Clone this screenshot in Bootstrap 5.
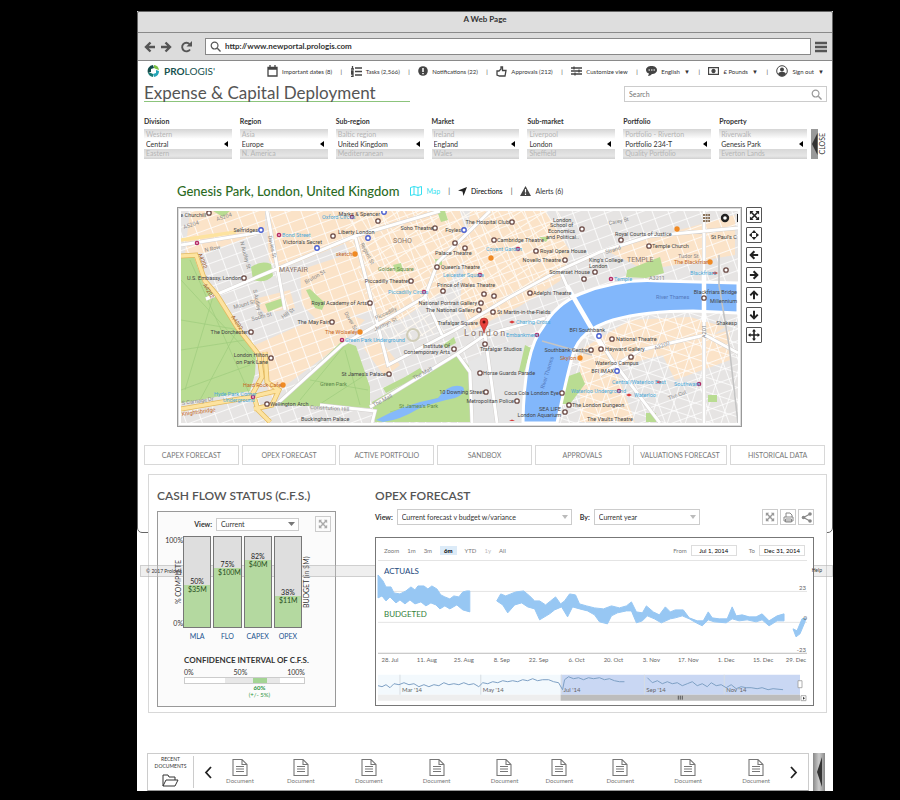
<!DOCTYPE html>
<html lang="en">
<head>
<meta charset="utf-8">
<meta name="viewport" content="width=device-width, initial-scale=1">
<title>A Web Page</title>
<link href="https://cdn.jsdelivr.net/npm/bootstrap@5.3.0/dist/css/bootstrap.min.css" rel="stylesheet">
<style>
body{background:#000;font-family:Lato,"Open Sans",sans-serif;font-size:7px;line-height:9px;color:#333;padding:11px 67px 9px 137px}
button,select,input{font-family:inherit;font-size:inherit;line-height:inherit;color:inherit;padding:0;border:0;background:none}
svg{display:block;flex:none}
a{color:inherit;text-decoration:none}
.ic{fill:none;stroke:#444;stroke-width:1.3}
.window{background:#fff}
.frame{inset:0 0 auto 0;height:522px;border:1px solid #666;border-radius:2px 2px 5px 5px;pointer-events:none}
.titlebar{background:#dedede;height:22px;border-bottom:1px solid #8a8a8a;font-size:8px;font-weight:700;padding-top:4px}
.toolbar{background:#dcdcdc;height:28px;border-bottom:1px solid #8a8a8a;padding:0 6px 0 7px}
.address{border:1px solid #888;background:#fff;height:17px}
.address input{font-size:8px;font-weight:700;color:#333;outline:0}
.topnav{height:20px;padding:0 9px 0 10px}
.brandname{font-size:10px;line-height:12px;color:#17524f}
.links{margin-left:52px;font-size:6px}
.heading{padding:4px 6px 0 7px}
.heading h1{font-size:17px;line-height:16px;color:#555;width:266px;border-bottom:1px solid #8cc47c;margin:0}
.searchbox{width:203px;height:16px;border:1px solid #ccc;color:#888}
.filters{padding:15px 6px 0 7px}
.filters label{font-weight:700;font-size:7px;line-height:9px;margin-bottom:3px;display:block}
.wheel{height:30px;background:linear-gradient(#d5d5d5,#f8f8f8 28%,#fff 33%,#fff 66%,#d8d8d8 67%,#e6e6e6 90%,#d0d0d0);padding:1px 0 0 2px;color:#b5b5b5;overflow:hidden}
.wheel select{appearance:none;display:block;width:100%;height:10px;color:#333;line-height:10px;outline:0}
.wheel .tri{right:4px;top:12px;border:3px solid transparent;border-right:4px solid #000;border-left:0}
.vert{writing-mode:vertical-rl;transform:rotate(180deg);white-space:nowrap}
.mapsec{padding:24px 71px 0 40px}
.mapsec h2{font-size:13px;line-height:16px;color:#2c6b1f;margin:0 11px 0 0;font-weight:500}
.mapbox{border:1px solid #999;outline:1px solid #ddd;outline-offset:-2px;padding:3px}
.mapbtn{width:16px;height:16px;border:1px solid #555;border-radius:1px;display:grid;place-items:center}
.tabs7{padding:18px 8px 0 7px;gap:3px}
.tabs7 button{flex:1 1 0;height:20px;border:1px solid #d8d8d8;font-size:7px;color:#777;white-space:nowrap}
.panel{margin:9px 6px 0 11px;border:1px solid #d8d8d8;background:#fff;height:239px;padding:12px 12px 4px 8px;gap:39px}
.panel h2{font-size:12px;line-height:17px;font-weight:600;color:#555;margin:0}
.cfs{width:179px}
.cfsbox{border:1px solid #999;background:#fbfbfb;margin-top:7px;height:196px}
.cfstitle{font-size:8px;margin-top:15px}
.sel{border:1px solid #ccc;appearance:none;background:#fff;outline:0}
.plot{height:92px;gap:2px}
.bar{flex:1 1 0;border:1px solid #777;background:#dedede;color:#222;font-size:7px;line-height:8px;text-align:center}
.fill{background:#b4d9a0;color:#274e1c;text-align:left;padding-left:4px}
.names{font-size:7px;color:#1b5490;gap:2px}
.names span{flex:1 1 0;text-align:center}
.ci{height:7px;border:1px solid #ccc;background:linear-gradient(90deg,#fff 34%,#e8e8e8 34% 57%,#a4d494 57% 69%,#e8e8e8 69% 80%,#fff 80%)}
.opexrow{margin-top:5px}
.opexbox{border:1px solid #777;background:#fff;height:169px;margin-top:12px;padding:0 1px;z-index:3}
.tool{width:16px;height:16px;border:1px solid #ccc;display:grid;place-items:center}
.strip{left:3px;right:0;top:554px;height:12px;background:rgba(210,210,210,.35);border:1px solid rgba(160,160,160,.4);font-size:5px;line-height:10px;padding:0 11px 0 5px;z-index:2}
.dates input{width:46px;height:11px;border:1px solid #ddd;text-align:center}
.zoomrow{font-size:6px;color:#777;padding:3px 3px 0 7px;height:22px}
.docs{margin:40px 8px 0 10px;height:38px}
.docbar{border:1px solid #ccc;border-bottom-color:#999}
.recent{width:46px;border-right:1px solid #ccc;font-size:5px;line-height:7px;text-align:center;margin:2px 0}
.prev{padding:0 7px 0 10px}
.next{padding-right:10px}
.doclist{display:grid;flex:1 1 0;grid-template-columns:40fr 82fr 54fr 82fr 54fr 56fr 66fr 70fr 66fr;font-size:6px;line-height:7px;color:#777}
.doclist a{display:flex;flex-direction:column;align-items:center;min-width:0}
.handle{width:12px;background:linear-gradient(90deg,#888,#ccc 50%,#888)}
</style>
</head>
<body>
<svg width="0" height="0" class="position-absolute" aria-hidden="true">
<defs>
<symbol id="expand" viewBox="0 0 12 12"><path d="M2.5 2.5l7 7M9.500 2.500l-7 7" stroke="currentColor" stroke-width="1.700" fill="none"/><path d="M1 1h4L1 5zM11 1v4L7 1zM1 11V7l4 4zM11 11H7l4-4z" fill="currentColor"/></symbol>
<symbol id="arrow" viewBox="0 0 12 12"><path d="M11 6H2M6.500 1.500L2 6l4.500 4.500" fill="none" stroke="currentColor" stroke-width="2.400"/></symbol>
<symbol id="doc" viewBox="0 0 16 18"><path d="M1 1h9l5 5v11H1zM10 1v5h5M4 8h8M4 10.500h8M4 13h8" fill="none" stroke="#777" stroke-width="1.100"/></symbol>
<symbol id="mag" viewBox="0 0 12 12"><circle cx="5" cy="5" r="3.700" fill="none" stroke="currentColor" stroke-width="1.300"/><path d="M8 8l3.500 3.500" stroke="currentColor" stroke-width="1.500"/></symbol>
</defs>
</svg>
<div class="window position-relative">
<div class="frame position-absolute"></div>
<div class="titlebar text-center">A Web Page</div>
<div class="toolbar d-flex align-items-center">
  <button aria-label="Back"><svg width="12" height="12" color="#555"><use href="#arrow"/></svg></button>
  <button aria-label="Forward" class="ms-1 me-2"><svg width="12" height="12" viewBox="0 0 12 12"><path d="M1 6h9M5.500 1.500L10 6l-4.500 4.500" fill="none" stroke="#555" stroke-width="2.400"/></svg></button>
  <button aria-label="Reload" class="me-2"><svg width="13" height="12" viewBox="0 0 13 12"><path d="M10 8.500A4.300 4.300 0 1 1 9.500 3" fill="none" stroke="#555" stroke-width="1.900"/><path d="M12 0v5.500H6.500z" fill="#555"/></svg></button>
  <div class="address d-flex align-items-center flex-grow-1 px-1 ms-1 me-1"><svg width="11" height="11" color="#555"><use href="#mag"/></svg><input class="flex-grow-1 ms-1" aria-label="Address" value="http://www.newportal.prologis.com"></div>
  <button aria-label="Menu"><svg width="12" height="12" viewBox="0 0 12 12"><path d="M0 2h12M0 6h12M0 10h12" stroke="#555" stroke-width="2.400"/></svg></button>
</div>
<nav class="topnav d-flex align-items-center">
  <svg width="13" height="12" viewBox="0 0 13 12"><path d="M6 0A6 6 0 0 0 1 8l3-1V4l3-1z" fill="#124d4b"/><path d="M7 0a6 6 0 0 1 5 5L9 4 7 3z" fill="#7cc142"/><path d="M12 6a6 6 0 0 1-5 6l-1-3 3-1V5z" fill="#23a5b8"/><path d="M1 8a6 6 0 0 0 5 4V9L4 8z" fill="#1b7d77"/></svg>
  <span class="brandname ms-1"><b>PRO</b>LOGIS'</span>
  <div class="links d-flex align-items-center justify-content-between flex-grow-1 text-nowrap">
    <a href="#" class="d-flex align-items-center gap-1"><svg width="11" height="12" viewBox="0 0 11 12" class="ic"><path d="M1 2.500h9v8.500H1zM1 4h9M3 0v3M8 0v3"/></svg>Important dates (8)</a><span>|</span>
    <a href="#" class="d-flex align-items-center gap-1"><svg width="11" height="11" viewBox="0 0 11 11" class="ic"><path d="M4 2h7M4 5.500h7M4 9h7M1.500 0v3M0 3h3M0 5h2v1.500H0M0 8h2v2.500H0"/></svg>Tasks (2,566)</a><span>|</span>
    <a href="#" class="d-flex align-items-center gap-1"><svg width="10" height="10" viewBox="0 0 10 10"><circle cx="5" cy="5" r="4.800" fill="#444"/><path d="M5 2v4M5 7v1.300" stroke="#fff" stroke-width="1.500"/></svg>Notifications (22)</a><span>|</span>
    <a href="#" class="d-flex align-items-center gap-1"><svg width="11" height="11" viewBox="0 0 11 11" class="ic"><path d="M1 5h2l2-2V1h1.500v3.500H10L9 10H3.500L1 9z"/></svg>Approvals (212)</a><span>|</span>
    <a href="#" class="d-flex align-items-center gap-1"><svg width="11" height="10" viewBox="0 0 11 10" class="ic"><path d="M0 2h11M0 5h11M0 8h11M3 .5v3M8 3.500v3M4 6.500v3"/></svg>Customize view</a><span>|</span>
    <a href="#" class="d-flex align-items-center gap-1"><svg width="11" height="10" viewBox="0 0 11 10"><path d="M5.500 0c3 0 5.500 1.500 5.500 4S8.500 8 6 8c-1 1-2.500 2-4 2l1-2.500C1 7 0 5.500 0 4 0 1.500 2.500 0 5.500 0z" fill="#444"/><path d="M2.500 4h1.500M5 4h1.500M7.500 4H9" stroke="#fff"/></svg>English <span>▼</span></a><span>|</span>
    <a href="#" class="d-flex align-items-center gap-1"><svg width="11" height="8" viewBox="0 0 11 8" class="ic"><path d="M.5.5h10v7H.5z"/><circle cx="5.500" cy="4" r="1.500" fill="#444"/></svg>£ Pounds <span>▼</span></a><span>|</span>
    <a href="#" class="d-flex align-items-center gap-1"><svg width="12" height="12" viewBox="0 0 12 12"><circle cx="6" cy="6" r="5.300" fill="#fff" stroke="#444"/><circle cx="6" cy="4.500" r="2" fill="#444"/><path d="M2 9c1-3 7-3 8 0-2 3-6 3-8 0z" fill="#444"/></svg>Sign out <span>▼</span></a>
  </div>
</nav>
<div class="heading d-flex justify-content-between align-items-end">
  <h1 class="fw-normal text-nowrap">Expense &amp; Capital Deployment</h1>
  <div class="searchbox d-flex align-items-center px-1"><input class="flex-grow-1" placeholder="Search" aria-label="Search"><svg width="11" height="11" color="#999"><use href="#mag"/></svg></div>
</div>
<div class="filters d-flex align-items-end">
  <div class="d-flex flex-grow-1 gap-2">
    <div class="flex-fill w-100"><label for="f1">Division</label><div class="wheel position-relative">Western<select id="f1"><option>Central</option></select><i class="tri position-absolute"></i>Eastern</div></div>
    <div class="flex-fill w-100"><label for="f2">Region</label><div class="wheel position-relative">Asia<select id="f2"><option>Europe</option></select><i class="tri position-absolute"></i>N. America</div></div>
    <div class="flex-fill w-100"><label for="f3">Sub-region</label><div class="wheel position-relative">Baltic region<select id="f3"><option>United Kingdom</option></select><i class="tri position-absolute"></i>Mediterranean</div></div>
    <div class="flex-fill w-100"><label for="f4">Market</label><div class="wheel position-relative">Ireland<select id="f4"><option>England</option></select><i class="tri position-absolute"></i>Wales</div></div>
    <div class="flex-fill w-100"><label for="f5">Sub-market</label><div class="wheel position-relative">Liverpool<select id="f5"><option>London</option></select><i class="tri position-absolute"></i>Sheffield</div></div>
    <div class="flex-fill w-100"><label for="f6">Portfolio</label><div class="wheel position-relative">Portfolio - Riverton<select id="f6"><option>Portfolio 234-T</option></select><i class="tri position-absolute"></i>Quality Portfolio</div></div>
    <div class="flex-fill w-100"><label for="f7">Property</label><div class="wheel position-relative">Riverwalk<select id="f7"><option>Genesis Park</option></select><i class="tri position-absolute"></i>Everton Lands</div></div>
  </div>
  <button class="d-flex align-items-center ms-1" aria-label="Close"><svg width="7" height="30" viewBox="0 0 7 30"><path d="M0 0h7v30H0z" fill="#999"/><path d="M6.500 4v22L1 15z" fill="#333"/></svg><span class="vert">CLOSE</span></button>
</div>
<section class="mapsec">
  <div class="d-flex align-items-center text-nowrap mb-2">
    <h2>Genesis Park, London, United Kingdom</h2>
    <a href="#" class="d-flex align-items-center gap-1" style="color:#33dff0"><svg width="12" height="10" viewBox="0 0 12 10" fill="none" stroke="#33dff0"><path d="M.5 1.500L4 .5l4 1 3.500-1v8L8 9.500l-4-1-3.500 1zM4 .5v8M8 1.500v8"/></svg>Map</a><span class="mx-2">|</span>
    <a href="#" class="d-flex align-items-center gap-1 text-black"><svg width="9" height="9" viewBox="0 0 9 9"><path d="M9 0L5.500 9 4.500 4.500 0 3.500z" fill="#222"/></svg>Directions</a><span class="mx-2">|</span>
    <a href="#" class="d-flex align-items-center gap-1"><svg width="11" height="10" viewBox="0 0 11 10"><path d="M5.500 0L11 10H0z" fill="#444"/><path d="M5.500 3v3.500M5.500 7.500v1.500" stroke="#fff" stroke-width="1.200"/></svg>Alerts (6)</a>
  </div>
  <div class="d-flex gap-1 align-items-start">
    <div class="mapbox flex-grow-1">
<svg class="w-100 h-auto" viewBox="181 211 557 212" font-family="Roboto,sans-serif" font-size="5.500" fill="#444" role="img" aria-label="Map of central London">
<defs>
<pattern id="g1" width="15" height="11" patternUnits="userSpaceOnUse" patternTransform="rotate(-20)"><path d="M0 0H15M0 0V11" stroke="#fff" stroke-width="1.600"/></pattern>
<pattern id="g2" width="10" height="13" patternUnits="userSpaceOnUse" patternTransform="rotate(-32)"><path d="M0 0H10M0 0V13" stroke="#fffaf2" stroke-width="1.800"/></pattern>
<pattern id="g3" width="17" height="14" patternUnits="userSpaceOnUse" patternTransform="rotate(18)"><path d="M0 0H17M0 0V14" stroke="#fff" stroke-width="1.500"/></pattern>
<g id="poi"><circle r="2.200" fill="#fff" stroke="#6b4a45" stroke-width="1.300"/></g>
<g id="tube"><circle r="2.300" fill="#b52a66"/><path d="M-1 0h2" stroke="#fff"/></g>
<g id="food"><circle r="2.700" fill="#f08a24"/></g>
<g id="shop"><circle r="2.200" fill="#fff" stroke="#4a5fd0" stroke-width="1.400"/></g>
<path id="roads" d="M206 299L262 275 355 236 440 211M181 245L262 232M267 211L285 310M355 236L388 365 455 330 510 297 560 270 600 252 650 236 738 228M278 403L342 345 425 297 438 262 490 211M370 407L457 354 485 335 497 423M592 328L612 360 660 423M704 211V281M704 312V423M600 375L640 350 705 335 738 353M320 405L375 411 372 423M457 354L470 372 472 423M425 297L442 335M560 270L572 298M485 335L545 318"/>
</defs>
<path d="M181 211h557v212H181z" fill="#e6e4e3"/>
<g fill="#fbe3c8"><path d="M345 211L460 211 470 250 445 290 400 320 380 325 365 290 340 230zM470 211h75l25 40-10 30-40 25-50 25-10-30zM266 211h75l10 30-70 28-12-8zM300 270l60-20 12 60-50 15-20-20zM255 345l80-35 30 10-25 25-70 52zM190 211h75v20l-60 22-20 0zM605 250l130-35v40l-90 15zM580 350l50-30 60-3 35 10-30 20-80 20 20 55h-55zM250 300l40-10 5 18-30 5zM660 350l70-20v30l-55 20zM380 340l20 25-15 12-22-30z"/></g>
<path d="M181 211h557v212H181z" fill="url(#g1)"/><path d="M340 211h220l10 60-100 60-90 10z" fill="url(#g2)"/><path d="M580 320l158-10v113H560z" fill="url(#g3)"/>
<path d="M500 345l25-10 3 30-6 58h-50l-5-60z" fill="#e6e6e6"/>
<g fill="#b9dc92">
<path d="M181 257h13l10 28 13 12 22 33 17 26-1 18-5 17-69 12z"/>
<path d="M342 341l14 5 14 41v21l-92-3 4-6z"/>
<path d="M372 402l85-48 12 12 3 56h-97z"/>
<path d="M251 267q10-7 20-3l2 12q-8 8-20 4zM306 290l4-1 15 14-3 7-7-2zM265 304l18-6 2 7-17 7zM213 211h17l-7 6zM437 211h8l3 9-7 2zM393 265l8-2 2 8-7 1zM435 259h7v6h-6zM627 270l33-13 4 16-18 5-20-1zM566 377l14-5 5 12-15 20h-9zM525 345l6 3-7 25-5-2zM708 395h9v7h-9zM383 388l22-11 3 5-22 11zM400 380l20-12 3 5-19 12zM443 345l11-8 2 6-10 5zM539 237h10l-3 5zM646 413h10v9h-10z"/></g>
<path d="M181 280L255 360M181 320L240 330M190 260L250 395M181 390L250 365M185 390L215 290M181 350L245 340M200 400L240 325M300 400L345 345M320 404L365 375M345 350L360 405M310 380L368 390M390 412L468 390" stroke="#9ecc7c" stroke-width=".7" fill="none"/>
<path d="M376 420Q405 404 438 398q12-16 25-11 4 6-8 11-20 4-37 11-18 11-35 13z" fill="#85b9fa"/>
<path d="M523 423Q524 350 543 327 556 304 580 294 620 278 660 281L738 283V313L693 311Q645 311 613 320 580 330 573 354 566 380 557 423z" fill="#82b7fb" stroke="#fff" stroke-width="3"/>
<use href="#roads" fill="none" stroke="#d3d0ce" stroke-width="4"/>
<use href="#roads" fill="none" stroke="#ffffff" stroke-width="3"/>
<path d="M719 255v30l10 60 9 78M542 341l50 14" stroke="#c4c4c4" stroke-width="1.600" fill="none"/>
<path d="M567 286L603 348M704 274V322" stroke="#ffffff" stroke-width="4.500" fill="none"/>
<path d="M181 256l15-1 9 26 12 14 20 32 22 28 3 22-9 16 5 17 12 12M181 409l70-12 29-7M265 352l2 30 12 8-7 15-18 4" fill="none" stroke="#e3b95e" stroke-width="5"/>
<path d="M181 256l15-1 9 26 12 14 20 32 22 28 3 22-9 16 5 17 12 12M181 409l70-12 29-7M265 352l2 30 12 8-7 15-18 4M181 240l55-8" fill="none" stroke="#fde3a0" stroke-width="3.500"/>
<circle cx="413" cy="335" r="6" fill="none" stroke="#d0cdb8" stroke-width="2"/>
<g><use href="#poi" x="209" y="213"/><use href="#poi" x="244" y="278"/><use href="#poi" x="251" y="332"/><use href="#poi" x="271" y="358"/><use href="#poi" x="267" y="404"/><use href="#poi" x="332" y="322"/><use href="#poi" x="370" y="303"/><use href="#poi" x="333" y="236"/><use href="#poi" x="378" y="221"/><use href="#poi" x="435" y="228"/><use href="#poi" x="411" y="281"/><use href="#poi" x="455" y="243"/><use href="#poi" x="465" y="248"/><use href="#poi" x="437" y="267"/><use href="#poi" x="443" y="291"/><use href="#poi" x="454" y="349"/><use href="#poi" x="389" y="374"/><use href="#poi" x="512" y="222"/><use href="#poi" x="494" y="240"/><use href="#poi" x="536" y="251"/><use href="#poi" x="565" y="260"/><use href="#poi" x="584" y="279"/><use href="#poi" x="595" y="272"/><use href="#poi" x="582" y="229"/><use href="#poi" x="621" y="240"/><use href="#poi" x="649" y="246"/><use href="#poi" x="726" y="270"/><use href="#poi" x="530" y="293"/><use href="#poi" x="493" y="312"/><use href="#poi" x="481" y="303"/><use href="#poi" x="479" y="310"/><use href="#poi" x="484" y="294"/><use href="#poi" x="494" y="296"/><use href="#poi" x="485" y="344"/><use href="#poi" x="480" y="373"/><use href="#poi" x="486" y="392"/><use href="#poi" x="517" y="401"/><use href="#poi" x="562" y="393"/><use href="#poi" x="569" y="405"/><use href="#poi" x="565" y="412"/><use href="#poi" x="591" y="350"/><use href="#poi" x="601" y="349"/><use href="#poi" x="612" y="339"/><use href="#poi" x="631" y="357"/><use href="#poi" x="704" y="298"/>
<use href="#shop" x="261" y="230"/><use href="#shop" x="317" y="248"/><use href="#shop" x="368" y="238"/><use href="#shop" x="384" y="212"/><use href="#shop" x="464" y="230"/><use href="#shop" x="599" y="336"/><use href="#shop" x="617" y="371"/>
<use href="#food" x="355" y="254"/><use href="#food" x="360" y="332"/><use href="#food" x="283" y="385"/><use href="#food" x="491" y="258"/><use href="#food" x="677" y="229"/><use href="#food" x="710" y="262"/><use href="#food" x="580" y="358"/>
<use href="#tube" x="197" y="243"/><use href="#tube" x="279" y="235"/><use href="#tube" x="352" y="217"/><use href="#tube" x="424" y="292"/><use href="#tube" x="342" y="340"/><use href="#tube" x="253" y="397"/><use href="#tube" x="518" y="249"/><use href="#tube" x="480" y="275"/><use href="#tube" x="611" y="279"/><use href="#tube" x="537" y="335"/><use href="#tube" x="699" y="384"/><use href="#tube" x="619" y="391"/></g>
<g fill="#d93d3d"><path d="M509 322l3-1.500 3 1.500-3 1.500zM656 382l3-1.500 3 1.500-3 1.500zM626 395l3-1.500 3 1.500-3 1.500zM712 273l3-1.500 3 1.500-3 1.500zM509 421l3-1.500 3 1.500z"/></g>
<g text-anchor="end"><text x="206" y="217">e Churchill</text><text x="258" y="232">Selfridges</text><text x="322" y="244">Victoria's Secret</text><text x="241" y="280">U.S. Embassy, London</text><text x="248" y="334">The Dorchester</text><text x="268" y="357">London Hilton</text><text x="268" y="364">on Park Lane</text><text x="329" y="324">The May Fair</text><text x="367" y="305">Royal Academy of Arts</text><text x="408" y="283">Piccadilly Theatre</text><text x="433" y="230">Soho Theatre</text><text x="461" y="232">Foyles</text><text x="477" y="305">National Portrait Gallery</text><text x="475" y="312">The National Gallery</text><text x="478" y="325">Trafalgar Square</text><text x="450" y="348">Institute Of</text><text x="450" y="354">Contemporary Arts</text><text x="386" y="376">St James's Palace</text><text x="509" y="224">The Hospital Club</text><text x="561" y="262">Novello Theatre</text><text x="590" y="274">Somerset House</text><text x="588" y="352">Southbank Centre</text><text x="605" y="332">BFI Southbank</text><text x="614" y="373">BFI IMAX</text><text x="559" y="395">Coca Cola London Eye</text><text x="514" y="403">Metropolitan Police</text><text x="484" y="394">10 Downing Street</text><text x="561" y="411">SEA LIFE</text><text x="561" y="417">London Aquarium</text><text x="380" y="216">Marks &amp; Spencer</text></g>
<g><text x="338" y="234">Liberty London</text><text x="435" y="255">Palace Theatre</text><text x="441" y="269">Queen's Theatre</text><text x="437" y="287">Prince of Wales Theatre</text><text x="270" y="406">Wellington Arch</text><text x="301" y="421">Buckingham Palace</text><text x="497" y="242">Cambridge Theatre</text><text x="540" y="253">Royal Opera House</text><text x="553" y="222">London</text><text x="550" y="227">School of</text><text x="548" y="233">Economics</text><text x="546" y="239">and Political..</text><text x="615" y="236">Royal Courts of Justice</text><text x="652" y="248">Temple Church</text><text x="589" y="262">King's College</text><text x="589" y="268">London</text><text x="711" y="239">St Paul's C</text><text x="533" y="295">Adelphi Theatre</text><text x="497" y="314">St Martin-in-the-Fields</text><text x="480" y="351">Trafalgar Studios</text><text x="483" y="375">Horse Guards Parade</text><text x="572" y="407">The London Dungeon</text><text x="587" y="421">The Vaults Theatre</text><text x="616" y="341">National Theatre</text><text x="605" y="351">Hayward Gallery</text><text x="595" y="365">Waterloo Campus</text></g>
<g text-anchor="end"><text x="737" y="294">Blackfriars Bridge</text><text x="737" y="303">Millennium</text><text x="737" y="325">Shakesp</text></g>
<g fill="#4ba8d8"><text x="322" y="219">Oxford Circus</text><text x="282" y="237">Bond Street</text><text x="388" y="294">Piccadilly Circus</text><text x="345" y="342">Green Park Underground</text><text x="214" y="396">Hyde Park Corner</text><text x="223" y="402">Underground</text><text x="486" y="251">Covent Garden</text><text x="443" y="277">Leicester Square</text><text x="614" y="281">Temple</text><text x="516" y="324">Charing Cross</text><text x="506" y="337">Embankment</text><text x="690" y="275">Blackfriars</text><text x="612" y="384">Central/Waterloo East</text><text x="674" y="386">Southwark</text><text x="571" y="393">Waterloo Underground</text><text x="634" y="397">Waterloo</text></g>
<g fill="#c4661f"><text x="336" y="256">sketch</text><text x="325" y="334">The Wolseley</text><text x="243" y="387">Hard Rock Cafe</text><text x="674" y="264">The Blackfriar</text><text x="560" y="360">Skylon</text><text x="182" y="416" transform="rotate(-8 182 416)">Knightsbridge</text></g>
<g fill="#888"><text x="184" y="229" transform="rotate(-18 184 229)">A5204</text><text x="217" y="221" transform="rotate(-18 217 221)">A5204</text><text x="205" y="252" transform="rotate(-12 205 252)">N Row</text><text x="268" y="236" transform="rotate(78 268 236)">Davies St</text><text x="240" y="242" transform="rotate(75 240 242)">N Audley St</text><text x="253" y="290" transform="rotate(78 253 290)">S Audley St</text><text x="234" y="309" transform="rotate(-15 234 309)">Mount St</text><text x="252" y="321" transform="rotate(-15 252 321)">South St</text><text x="283" y="319" transform="rotate(-35 283 319)">Hill St</text><text x="306" y="284" transform="rotate(-30 306 284)">Bruton St</text><text x="360" y="244" transform="rotate(62 360 244)">Regent St</text><text x="376" y="320" transform="rotate(-25 376 320)">Piccadilly</text><text x="375" y="331" transform="rotate(-25 375 331)">Jermyn St</text><text x="344" y="313" transform="rotate(60 344 313)">Dover St</text><text x="414" y="380" transform="rotate(-28 414 380)">The Mall</text><text x="374" y="407" transform="rotate(-28 374 407)">The Mall</text><text x="310" y="409" transform="rotate(3 310 409)">Constitution Hill</text><text x="182" y="405" transform="rotate(-8 182 405)">S Carriage Dr</text><text x="606" y="254" transform="rotate(-18 606 254)">Strand</text><text x="609" y="225" transform="rotate(-12 609 225)">Carey St</text><text x="678" y="258">Tudor St</text><text x="649" y="280">A3211</text><text x="655" y="350" transform="rotate(-20 655 350)">A3200</text><text x="706" y="338" transform="rotate(-90 706 338)">A201</text><text x="669" y="400" transform="rotate(-20 669 400)">The Cut</text></g>
<g fill="#97511f"><text x="198" y="254" transform="rotate(68 198 254)">A4202</text><text x="203" y="285" transform="rotate(60 203 285)">A4202</text><text x="231" y="317" transform="rotate(56 231 317)">A4202</text></g>
<g fill="#5f8b4a"><text x="378" y="271">Golden Square</text><text x="320" y="386">Green Park</text><text x="399" y="408">St James's Park</text></g>
<g fill="#5378bb"><text x="656" y="299">River Thames</text><text x="544" y="389" transform="rotate(-73 544 389)">River Thames</text></g>
<g fill="#8c7468" font-size="7"><text x="279" y="272">MAYFAIR</text><text x="393" y="243">SOHO</text><text x="627" y="262">TEMPLE</text></g>
<text x="464" y="336" font-size="9" fill="#8c7468">L o n d o n</text>
<path d="M484 333c-1-6-4-7-4-11a4 4 0 0 1 8 0c0 4-3 5-4 11z" fill="#e8413b" stroke="#a72a25" stroke-width=".6"/><circle cx="484" cy="322" r="1.500" fill="#64100d"/>
<path d="M703 215h7M703 218h7M703 221h7" stroke="#6a4a2a" stroke-width="1.600" stroke-dasharray="2 .6"/><circle cx="725" cy="218" r="3" fill="#fff" stroke="#222" stroke-width="2.400"/><path d="M737.500 214v8" stroke="#222"/>
</svg>
    </div>
    <div class="d-flex flex-column gap-1">
      <button class="mapbtn" aria-label="Full screen"><svg width="11" height="11" color="#222"><use href="#expand"/></svg></button>
      <button class="mapbtn" aria-label="Centre"><svg width="10" height="10" viewBox="0 0 12 12"><path d="M6 0l3 3.500H3zM6 12l3-3.500H3zM0 6l3.500-3v6zM12 6L8.500 3v6z" fill="#222"/></svg></button>
      <button class="mapbtn" aria-label="Left"><svg width="10" height="10" color="#222"><use href="#arrow"/></svg></button>
      <button class="mapbtn" aria-label="Right"><svg width="10" height="10" viewBox="0 0 12 12"><path d="M1 6h9M5.500 1.500L10 6l-4.500 4.500" fill="none" stroke="#222" stroke-width="2.400"/></svg></button>
      <button class="mapbtn" aria-label="Up"><svg width="10" height="10" viewBox="0 0 12 12"><path d="M6 11V2M1.500 6.500L6 2l4.500 4.500" fill="none" stroke="#222" stroke-width="2.400"/></svg></button>
      <button class="mapbtn" aria-label="Down"><svg width="10" height="10" viewBox="0 0 12 12"><path d="M6 1v9M1.500 5.500L6 10l4.500-4.500" fill="none" stroke="#222" stroke-width="2.400"/></svg></button>
      <button class="mapbtn" aria-label="Pan"><svg width="12" height="12" viewBox="0 0 12 12"><path d="M6 1v10M1 6h10" stroke="#222" stroke-width="1.600"/><path d="M6 0l2 2.500H4zM6 12l2-2.500H4zM0 6l2.500-2v4zM12 6L9.500 4v4z" fill="#222"/></svg></button>
    </div>
  </div>
</section>
<div class="tabs7 d-flex"><button>CAPEX FORECAST</button><button>OPEX FORECAST</button><button>ACTIVE PORTFOLIO</button><button>SANDBOX</button><button>APPROVALS</button><button>VALUATIONS FORECAST</button><button>HISTORICAL DATA</button></div>
<div class="panel d-flex position-relative">
  <section class="cfs flex-shrink-0">
    <h2 class="text-nowrap">CASH FLOW STATUS (C.F.S.)</h2>
    <div class="cfsbox">
      <div class="d-flex align-items-center justify-content-end pt-1 pe-1 mb-1"><label for="cv" class="me-1 fw-bold">View:</label><div class="position-relative me-3"><select id="cv" class="sel px-1" style="width:83px;height:13px"><option>Current</option></select><svg class="position-absolute end-0 top-50 translate-middle-y me-1" width="7" height="4" viewBox="0 0 7 4"><path d="M0 0h7L3.500 4z" fill="#777"/></svg></div><button class="tool" aria-label="Expand"><svg width="10" height="10" color="#aaa"><use href="#expand"/></svg></button></div>
      <div class="d-flex">
        <div class="d-flex flex-column justify-content-between align-items-end position-relative z-3" style="width:25px"><span>100%</span><span class="vert">% COMPLETE</span><span>0%</span></div>
        <div class="plot d-flex position-relative z-3" style="width:119px">
          <div class="bar d-flex flex-column justify-content-end">50%<div class="fill" style="height:47%">$35M</div></div>
          <div class="bar d-flex flex-column justify-content-end">75%<div class="fill" style="height:66%">$100M</div></div>
          <div class="bar d-flex flex-column justify-content-end">82%<div class="fill" style="height:75%">$40M</div></div>
          <div class="bar d-flex flex-column justify-content-end">38%<div class="fill" style="height:35%">$11M</div></div>
        </div>
        <span class="vert text-center">BUDGET (in $M)</span>
      </div>
      <div class="names d-flex mt-1" style="margin:0 33px 0 25px"><span>MLA</span><span>FLO</span><span>CAPEX</span><span>OPEX</span></div>
      <div class="cfstitle text-center fw-bold text-nowrap">CONFIDENCE INTERVAL OF C.F.S.</div>
      <div style="margin:3px 30px 0 26px"><div class="d-flex justify-content-between"><span>0%</span><span>50%</span><span>100%</span></div><div class="ci"></div>
      <div class="text-center" style="color:#2d9442;font-size:6px;line-height:7px;padding-left:30px"><b>60%</b><br>(+/- 5%)</div></div>
    </div>
  </section>
  <section class="flex-grow-1">
    <h2>OPEX FORECAST</h2>
    <div class="opexrow d-flex align-items-center">
      <label for="ov" class="fw-bold me-1">View:</label><div class="position-relative me-2"><select id="ov" class="sel px-1" style="width:175px;height:16px"><option>Current forecast v budget w/variance</option></select><svg class="position-absolute end-0 top-50 translate-middle-y me-1" width="6" height="4" viewBox="0 0 6 4"><path d="M0 0h6L3 4z" fill="#bbb"/></svg></div>
      <label for="ob" class="fw-bold me-1">By:</label><div class="position-relative"><select id="ob" class="sel px-1" style="width:106px;height:16px"><option>Current year</option></select><svg class="position-absolute end-0 top-50 translate-middle-y me-1" width="6" height="4" viewBox="0 0 6 4"><path d="M0 0h6L3 4z" fill="#bbb"/></svg></div>
      <div class="d-flex ms-auto" style="gap:2px"><button class="tool" aria-label="Expand"><svg width="10" height="10" color="#999"><use href="#expand"/></svg></button><button class="tool" aria-label="Print"><svg width="11" height="11" viewBox="0 0 11 11" fill="none" stroke="#888"><path d="M3 5V1h4l2 2v2M1 5h9v4H1zM2.500 7h6v3h-6z"/></svg></button><button class="tool" aria-label="Share"><svg width="11" height="11" viewBox="0 0 11 11"><path d="M9 2L2.500 5.500 9 9" fill="none" stroke="#888" stroke-width="1.200"/><g fill="#888"><circle cx="9" cy="2" r="1.800"/><circle cx="2.500" cy="5.500" r="1.800"/><circle cx="9" cy="9" r="1.800"/></g></svg></button></div>
    </div>
    <div class="opexbox position-relative">
      <div class="zoomrow d-flex align-items-center gap-2"><span>Zoom</span><button>1m</button><button>3m</button><button class="fw-bold text-black px-1" style="background:#dcebf8">6m</button><button>YTD</button><button class="opacity-50">1y</button><button>All</button>
      <div class="dates d-flex align-items-center gap-1 ms-auto pe-1"><label for="d1">From</label><input id="d1" value="Jul 1, 2014" class="text-black me-2"><label for="d2">To</label><input id="d2" value="Dec 31, 2014" class="text-black"></div></div>
<svg class="w-100 h-auto" viewBox="377 561 436 144" font-size="6" fill="#666" role="img" aria-label="Operating expense forecast">
<path d="M378 561.500H808M378 592.500H808M378 623.500H808" stroke="#e4e4e4"/><path d="M378 654.500H808" stroke="#bbb"/>
<g fill="#97c7f3" stroke="#97c7f3" stroke-linejoin="round">
<path d="M378 576L383 582 386 588 391 588 394 594 400 595 406 592 411 588 415 591 418 587 424 587 428 590 432 587 437 590 441 596 445 598 450 600 454 597 459 598 463 593 467 592 470 592V613L463 611 457 606 450 610 445 607 440 610 436 606 431 604 426 607 421 603 415 605 410 601 405 605 400 601 396 604 390 598 386 602 382 597 378 599z"/>
<path d="M497 602L501 595 506 597 511 595 516 593 524 592 530 597 535 602 540 602 546 606 551 602 556 598 561 605 565 602 570 595 576 596 580 605 587 607 595 609 604 610 612 607 620 609 627 607 632 603 637 613 643 614 647 607 654 613 660 616 666 608 671 613 676 611 684 611 690 619 698 622 704 622 709 613 713 619 720 620 728 620 733 608 737 617 743 616 750 618 757 618 763 615 770 622 778 617 785 615V622L778 622 770 627 763 621 757 623 748 621 740 622 733 620 727 624 715 623 709 621 703 627 697 624 690 620 683 617 676 619 671 620 662 624 655 620 648 617 643 622 637 624 632 612 627 612 618 614 612 617 608 625 600 623 595 616 588 612 580 610 573 608 568 618 562 608 555 611 550 615 540 621 535 610 528 608 522 604 515 606 508 614 503 606z"/>
<path d="M794 630L798 632 803 620 807 619 806 623 801 635 797 638z"/></g>
<g font-size="8"><text x="384" y="575" fill="#23487d">ACTUALS</text><text x="384" y="618" fill="#338039">BUDGETED</text></g>
<g text-anchor="end"><text x="807" y="591">23</text><text x="808" y="621">0</text><text x="807" y="653">-23</text></g>
<g text-anchor="middle"><text x="390" y="663">28. Jul</text><text x="427" y="663">11. Aug</text><text x="464" y="663">25. Aug</text><text x="502" y="663">8. Sep</text><text x="539" y="663">22. Sep</text><text x="577" y="663">6. Oct</text><text x="614" y="663">20. Oct</text><text x="652" y="663">3. Nov</text><text x="689" y="663">17. Nov</text><text x="727" y="663">1. Dec</text><text x="764" y="663">15. Dec</text><text x="797" y="663">29. Dec</text></g>
<path d="M378 676h183v20H378z" fill="#f3f9fd"/><path d="M561 676h240v20H561z" fill="#c9d7f3"/><path d="M378 696h183v6H378z" fill="#eee"/><path d="M561 696h240v6H561z" fill="#bdbdbd"/>
<path d="M400 676v20M481 676v20M562 676v20M645 676v20M725 676v20" stroke="#d8dde2"/>
<path d="M378 687l4 1 4-2 4 3 4-4 5 1 5-2 5 2 5-1 5 3 5-2 5 2 5-2 5 1 5-3 5 2 5-1 5 1 5-2 5 2 5-1 5 3 4-4 5 1 5-2 5 1 5-2 5 1 5-1 5 1 5-2 5 1 5-2 5 2 5-1 6 0 5 2 5 1 4 7 2-10 4-3 5 2 5-1 5 2 5-2 5 1 6-1 5 2 5-1 5 2 5 1 5 0M648 679l5 5 5-2 5 3 5-2 5 2 5-1 5 3 5-2 5-2 5 4 5-2 5 3 4-4 5 3 5-1 5 3 5-3 5 4 5-2 5 1 5 0 6 1 5-1 6 2 5-1 10 1" fill="none" stroke="#7da0c4"/>
<g><text x="402" y="693">Mar '14</text><text x="483" y="693">May '14</text><text x="564" y="693">Jul '14</text><text x="647" y="693">Sep '14</text><text x="727" y="693">Nov '14</text></g>
<path d="M799 682h4v7h-4zM802 697h5v5h-5z" fill="#fff" stroke="#999" stroke-width=".8"/><path d="M679 697v4M681 697v4M683 697v4" stroke="#555"/><path d="M804 698l2 1.500-2 1.500z" fill="#333"/>
</svg>
    </div>
  </section>
</div>
<div class="strip position-absolute d-flex justify-content-between"><span>© 2017 Prologis</span></div>
<div class="strip position-absolute text-end bg-transparent border-0 z-3"><a href="#">Help</a></div>
<div class="docs d-flex gap-1">
  <div class="docbar d-flex flex-grow-1">
    <div class="recent">RECENT<br>DOCUMENTS<svg class="mx-auto mt-1" width="17" height="13" viewBox="0 0 17 13" fill="none" stroke="#333"><path d="M1 12V1h5l1 2h6v3M1 12l3-6h12l-3 6z"/></svg></div>
    <button class="prev" aria-label="Previous"><svg width="9" height="13" viewBox="0 0 9 13" fill="none" stroke="#222" stroke-width="1.800"><path d="M7 1L2 6.500 7 12"/></svg></button>
    <div class="doclist pt-1">
      <a href="#"><svg width="16" height="19"><use href="#doc"/></svg>Document</a><a href="#"><svg width="16" height="19"><use href="#doc"/></svg>Document</a><a href="#"><svg width="16" height="19"><use href="#doc"/></svg>Document</a><a href="#"><svg width="16" height="19"><use href="#doc"/></svg>Document</a><a href="#"><svg width="16" height="19"><use href="#doc"/></svg>Document</a><a href="#"><svg width="16" height="19"><use href="#doc"/></svg>Document</a><a href="#"><svg width="16" height="19"><use href="#doc"/></svg>Document</a><a href="#"><svg width="16" height="19"><use href="#doc"/></svg>Document</a><a href="#"><svg width="16" height="19"><use href="#doc"/></svg>Document</a>
    </div>
    <button class="next" aria-label="Next"><svg width="9" height="13" viewBox="0 0 9 13" fill="none" stroke="#222" stroke-width="1.800"><path d="M2 1l5 5.500L2 12"/></svg></button>
  </div>
  <button class="handle" aria-label="Collapse"><svg width="12" height="36" viewBox="0 0 12 36"><path d="M9 3v30L4 18z" fill="#333"/></svg></button>
</div>
</div>
<script src="https://cdn.jsdelivr.net/npm/bootstrap@5.3.0/dist/js/bootstrap.bundle.min.js"></script>
</body>
</html>
